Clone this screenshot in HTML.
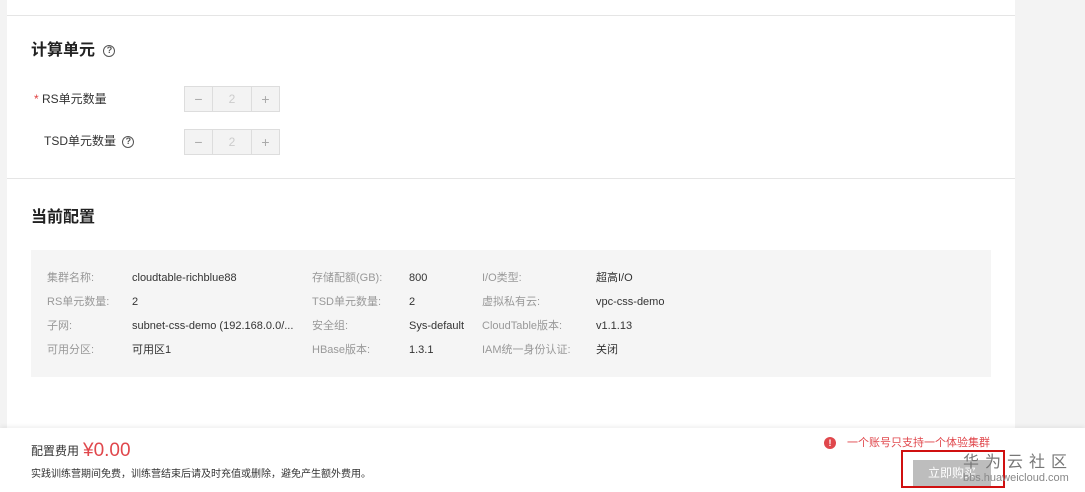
<!DOCTYPE html>
<html><head><meta charset="utf-8"><style>
*{margin:0;padding:0;box-sizing:border-box}
body{width:1085px;height:492px;background:#f3f3f3;font-family:"Liberation Sans","Noto Sans CJK SC",sans-serif;position:relative;overflow:hidden;color:#333}
.panel{position:absolute;left:7px;top:0;width:1008px;height:492px;background:#fff}
.hr{position:absolute;left:7px;width:1008px;height:1px;background:#e5e5e5}
.abs{position:absolute;white-space:nowrap}
h2{position:absolute;font-size:16px;line-height:20px;font-weight:bold;color:#222}
.q{display:inline-block;width:12px;height:12px;border:1.5px solid #555;border-radius:50%;font-size:9px;line-height:9px;text-align:center;font-weight:bold;color:#555;vertical-align:middle}
.lbl{font-size:12px;line-height:16px;color:#333}
.step{position:absolute;width:96px;height:26px;border:1px solid #ddd;background:#f3f3f3;display:flex}
.step div{height:24px;line-height:24px;text-align:center;color:#aaa;font-size:14px}
.step .b{width:27px}
.step .m{flex:1;border-left:1px solid #ddd;border-right:1px solid #ddd;font-size:12px;color:#ccc}
.cfg{position:absolute;left:31px;top:250px;width:960px;height:127px;background:#f5f5f5}
.cfg span{position:absolute;font-size:11px;line-height:14px;height:14px;white-space:nowrap}
.k{color:#999}.v{color:#333}
.foot{position:absolute;left:0;top:428px;width:1085px;height:64px;background:#fff;box-shadow:0 -2px 4px rgba(0,0,0,.06)}
</style></head><body>
<div class="panel"></div>
<div class="hr" style="top:15px"></div>
<div class="hr" style="top:178px"></div>
<h2 style="left:31px;top:41px">计算单元 <span class="q" style="margin-left:4px">?</span></h2>
<div class="abs lbl" style="left:34px;top:91px"><span style="color:#e04040">*</span> RS单元数量</div>
<div class="step" style="left:184px;top:86px"><div class="b">−</div><div class="m">2</div><div class="b">+</div></div>
<div class="abs lbl" style="left:44px;top:133px">TSD单元数量 <span class="q" style="margin-left:3px">?</span></div>
<div class="step" style="left:184px;top:129px"><div class="b">−</div><div class="m">2</div><div class="b">+</div></div>
<h2 style="left:31px;top:208px">当前配置</h2>
<div class="cfg">
<span class="k" style="left:16px;top:21px">集群名称:</span><span class="v" style="left:101px;top:21px">cloudtable-richblue88</span>
<span class="k" style="left:281px;top:21px">存储配额(GB):</span><span class="v" style="left:378px;top:21px">800</span>
<span class="k" style="left:451px;top:21px">I/O类型:</span><span class="v" style="left:565px;top:21px">超高I/O</span>
<span class="k" style="left:16px;top:45px">RS单元数量:</span><span class="v" style="left:101px;top:45px">2</span>
<span class="k" style="left:281px;top:45px">TSD单元数量:</span><span class="v" style="left:378px;top:45px">2</span>
<span class="k" style="left:451px;top:45px">虚拟私有云:</span><span class="v" style="left:565px;top:45px">vpc-css-demo</span>
<span class="k" style="left:16px;top:69px">子网:</span><span class="v" style="left:101px;top:69px">subnet-css-demo (192.168.0.0/...</span>
<span class="k" style="left:281px;top:69px">安全组:</span><span class="v" style="left:378px;top:69px">Sys-default</span>
<span class="k" style="left:451px;top:69px">CloudTable版本:</span><span class="v" style="left:565px;top:69px">v1.1.13</span>
<span class="k" style="left:16px;top:93px">可用分区:</span><span class="v" style="left:101px;top:93px">可用区1</span>
<span class="k" style="left:281px;top:93px">HBase版本:</span><span class="v" style="left:378px;top:93px">1.3.1</span>
<span class="k" style="left:451px;top:93px">IAM统一身份认证:</span><span class="v" style="left:565px;top:93px">关闭</span>
</div>
<div class="foot">
<div class="abs" style="left:31px;top:15px;font-size:12px;line-height:16px;color:#333">配置费用</div>
<div class="abs" style="left:83px;top:12px;font-size:19px;line-height:22px;color:#e0474c">¥0.00</div>
<div class="abs" style="left:31px;top:40px;font-size:10px;line-height:14px;color:#333">实践训练营期间免费，训练营结束后请及时充值或删除，避免产生额外费用。</div>
<div class="abs" style="left:824px;top:9px;width:12px;height:12px;border-radius:50%;background:#e0474c;color:#fff;font-size:9px;line-height:12px;text-align:center;font-weight:bold">!</div>
<div class="abs" style="left:847px;top:8px;font-size:11px;line-height:14px;color:#e0474c">一个账号只支持一个体验集群</div>
<div class="abs" style="left:913px;top:32px;width:78px;height:26px;background:#bdbdbd;color:#fff;font-size:12px;line-height:26px;text-align:center">立即购买</div>
<div class="abs" style="left:901px;top:22px;width:104px;height:38px;border:2px solid #d01010"></div>
<div class="abs" style="left:963px;top:25px;font-size:16px;line-height:20px;color:#777;letter-spacing:6px">华为云社区</div>
<div class="abs" style="left:963px;top:44px;font-size:11px;line-height:12px;color:#888">bbs.huaweicloud.com</div>
</div>
</body></html>
